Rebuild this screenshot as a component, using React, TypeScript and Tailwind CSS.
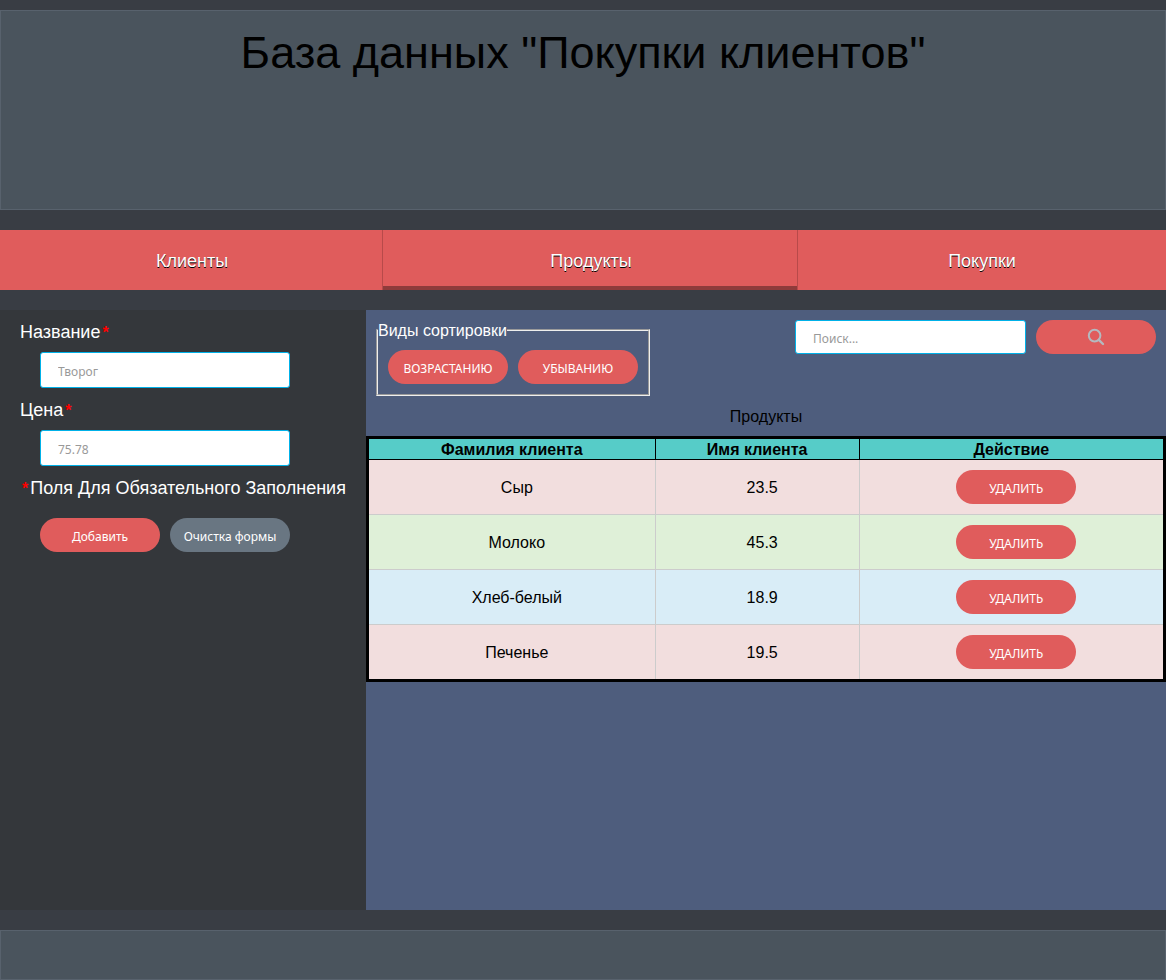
import React from "react";

const pill =
  "h-[34px] w-[120px] shrink-0 cursor-pointer rounded-full bg-[#e05c5c] pt-1 font-['Noto_Sans',sans-serif] text-xs text-white";
const field =
  "rounded-[3px] border border-[#00b1e8] bg-white px-[17px] pt-[2px] font-['Noto_Sans',sans-serif] text-xs text-gray-800 placeholder:text-[#999] outline-none";

const products = [
  { name: "Сыр", price: "23.5", color: "bg-[#f2dede]" },
  { name: "Молоко", price: "45.3", color: "bg-[#dff0d8]" },
  { name: "Хлеб-белый", price: "18.9", color: "bg-[#d9edf7]" },
  { name: "Печенье", price: "19.5", color: "bg-[#f2dede]" },
];

function Required() {
  return <span className="px-[2px] text-base font-bold text-[#ff0000]">*</span>;
}

function Tabs() {
  const link =
    "flex h-[60px] items-center justify-center border-r border-[#b84a4a] pt-[2px] pl-[2px] [text-shadow:0_1px_0_#000]";
  return (
    <nav className="grid grid-cols-[383fr_415fr_368fr] bg-[#e05c5c] text-lg text-white">
      <a href="#clients" className={link}>Клиенты</a>
      <a href="#products" aria-current="page" className={`${link} shadow-[inset_0_-4px_0_#8f3b3b]`}>
        Продукты
      </a>
      <a href="#purchases" className="flex h-[60px] items-center justify-center pt-[2px] [text-shadow:0_1px_0_#000]">
        Покупки
      </a>
    </nav>
  );
}

function ProductForm() {
  return (
    <form className="bg-[#34373b] px-5 pt-[10px] text-lg leading-6 text-white" onSubmit={(e) => e.preventDefault()}>
      <label htmlFor="name" className="block h-6 leading-6">Название<Required /></label>
      <div className="px-5 pt-2 pb-[10px]">
        <input id="name" placeholder="Творог" className={`${field} block h-9 w-full max-w-[250px]`} />
      </div>
      <label htmlFor="price" className="block h-6 leading-6">Цена<Required /></label>
      <div className="px-5 pt-2 pb-[10px]">
        <input id="price" placeholder="75.78" className={`${field} block h-9 w-full max-w-[250px]`} />
      </div>
      <p className="h-6 leading-6 whitespace-nowrap"><Required />Поля Для Обязательного Заполнения</p>
      <div className="flex gap-[10px] px-5 pt-[18px]">
        <button type="submit" className={pill}>Добавить</button>
        <button type="reset" className="h-[34px] w-[120px] shrink-0 cursor-pointer rounded-full bg-[#697682] pt-1 font-['Noto_Sans',sans-serif] text-xs text-white">
          Очистка формы
        </button>
      </div>
    </form>
  );
}

function ProductTable() {
  return (
    <table className="w-full table-fixed border-separate border-spacing-0 border-[3px] border-black text-center">
      <caption className="pt-[2px] pb-[10px] leading-[18px]">Продукты</caption>
      <colgroup>
        <col className="w-[36.1%]" />
        <col className="w-[25.7%]" />
        <col />
      </colgroup>
      <thead>
        <tr className="bg-[#56ccc8] leading-[18px]">
          <th scope="col" className="border-r border-b border-black pt-[2px]">Фамилия клиента</th>
          <th scope="col" className="border-r border-b border-black pt-[2px]">Имя клиента</th>
          <th scope="col" className="border-b border-black pt-[2px]">Действие</th>
        </tr>
      </thead>
      <tbody className="[&>tr:last-child>td]:border-b-0">
        {products.map((p) => (
          <tr key={p.name} className={p.color}>
            <td className="border-r border-b border-[#ccc] pt-[2px] pl-[10px]">{p.name}</td>
            <td className="border-r border-b border-[#ccc] pt-[2px] pl-[10px]">{p.price}</td>
            <td className="border-b border-[#ccc] py-[10px] pl-[10px]">
              <button type="button" className={`${pill} mx-auto block`}>УДАЛИТЬ</button>
            </td>
          </tr>
        ))}
      </tbody>
    </table>
  );
}

export default function App() {
  return (
    <div className="flex min-h-screen flex-col gap-5 bg-[#393d44] pt-[10px] font-['Liberation_Sans',Arial,sans-serif] text-base text-black">
      <header className="h-[200px] border border-[#58626d] bg-[#4a545d] pt-[14px] text-center">
        <h1 className="text-[45px] leading-[56px]">База данных "Покупки клиентов"</h1>
      </header>
      <Tabs />
      <main className="grid min-h-[600px] grid-cols-[366px_1fr]">
        <ProductForm />
        <section className="bg-[#4e5d7d]">
          <div className="flex items-start justify-between px-[10px] pt-[10px]">
            <fieldset className="border-2 border-[#eee] pb-[10px] [border-style:groove]">
              <legend className="pt-[2px] leading-[18px] text-white">Виды сортировки</legend>
              <div className="flex gap-[10px] px-[10px] pt-[10px]">
                <button type="button" className={pill}>ВОЗРАСТАНИЮ</button>
                <button type="button" className={pill}>УБЫВАНИЮ</button>
              </div>
            </fieldset>
            <form className="flex gap-[10px]" onSubmit={(e) => e.preventDefault()}>
              <input type="search" aria-label="Поиск" placeholder="Поиск..." className={`${field} h-[34px] w-[231px]`} />
              <button
                type="submit"
                aria-label="Найти"
                className="flex h-[34px] w-[120px] shrink-0 cursor-pointer items-center justify-center rounded-full bg-[#e05c5c] text-[#b4b9bf]"
              >
                <svg width="18" height="18" viewBox="0 0 18 18" fill="none" stroke="currentColor" aria-hidden="true">
                  <circle cx="7.6" cy="7.6" r="5.8" strokeWidth="2" />
                  <path d="M11.8 11.8 16 16" strokeWidth="2.4" strokeLinecap="round" />
                </svg>
              </button>
            </form>
          </div>
          <div className="pt-[10px]">
            <ProductTable />
          </div>
        </section>
      </main>
      <footer className="min-h-[50px] grow border border-[#58626d] bg-[#4a545d]" />
    </div>
  );
}
